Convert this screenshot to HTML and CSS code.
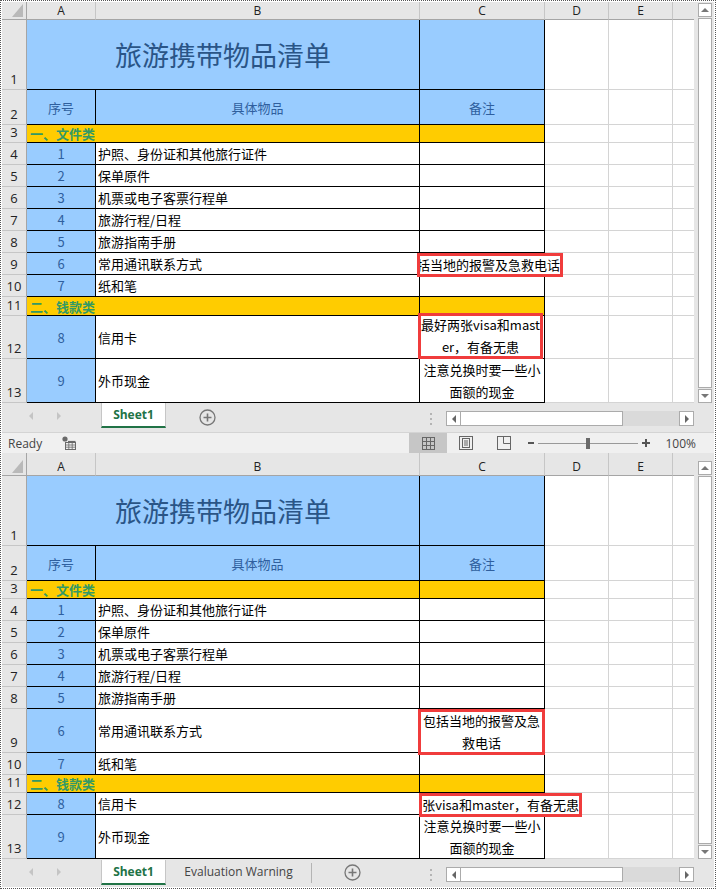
FILE: index.html
```html
<!DOCTYPE html>
<html lang="zh-CN">

<head>
    <meta charset="UTF-8">
    <title>旅游携带物品清单</title>
    <link rel="stylesheet" href="styles.css">
</head>

<body>
    <div class="page">
        <!-- 上面的窗口 -->
        <div class="window">
            <div class="main">
                <div class="sheet sheet-top">
                    <div class="corner"><svg width="11" height="13"><polygon points="11,0 11,13 0,13" fill="#b9b9b9"/></svg></div>
                    <div class="col-head">A</div>
                    <div class="col-head">B</div>
                    <div class="col-head">C</div>
                    <div class="col-head">D</div>
                    <div class="col-head">E</div>
                    <div class="col-head col-last"></div>

                    <div class="rh">1</div>
                    <div class="cell blue title span2">旅游携带物品清单</div>
                    <div class="cell blue"></div>
                    <div class="g"></div><div class="g"></div><div class="g g-last"></div>

                    <div class="rh">2</div>
                    <div class="cell blue head">序号</div>
                    <div class="cell blue head">具体物品</div>
                    <div class="cell blue head">备注</div>
                    <div class="g"></div><div class="g"></div><div class="g g-last"></div>

                    <div class="rh">3</div>
                    <div class="cell yellow section span2">一、文件类</div>
                    <div class="cell yellow"></div>
                    <div class="g"></div><div class="g"></div><div class="g g-last"></div>

                    <div class="rh">4</div>
                    <div class="cell blue num">1</div>
                    <div class="cell item">护照、身份证和其他旅行证件</div>
                    <div class="cell note"></div>
                    <div class="g"></div><div class="g"></div><div class="g g-last"></div>

                    <div class="rh">5</div>
                    <div class="cell blue num">2</div>
                    <div class="cell item">保单原件</div>
                    <div class="cell note"></div>
                    <div class="g"></div><div class="g"></div><div class="g g-last"></div>

                    <div class="rh">6</div>
                    <div class="cell blue num">3</div>
                    <div class="cell item">机票或电子客票行程单</div>
                    <div class="cell note"></div>
                    <div class="g"></div><div class="g"></div><div class="g g-last"></div>

                    <div class="rh">7</div>
                    <div class="cell blue num">4</div>
                    <div class="cell item">旅游行程/日程</div>
                    <div class="cell note"></div>
                    <div class="g"></div><div class="g"></div><div class="g g-last"></div>

                    <div class="rh">8</div>
                    <div class="cell blue num">5</div>
                    <div class="cell item">旅游指南手册</div>
                    <div class="cell note"></div>
                    <div class="g"></div><div class="g"></div><div class="g g-last"></div>

                    <div class="rh">9</div>
                    <div class="cell blue num">6</div>
                    <div class="cell item">常用通讯联系方式</div>
                    <div class="cell note">
                        <div class="mark mark-clip top-c9"><span>包括当地的报警及急救电话</span></div>
                    </div>
                    <div class="g"></div><div class="g"></div><div class="g g-last"></div>

                    <div class="rh">10</div>
                    <div class="cell blue num">7</div>
                    <div class="cell item">纸和笔</div>
                    <div class="cell note"></div>
                    <div class="g"></div><div class="g"></div><div class="g g-last"></div>

                    <div class="rh">11</div>
                    <div class="cell yellow section span2">二、钱款类</div>
                    <div class="cell yellow"></div>
                    <div class="g"></div><div class="g"></div><div class="g g-last"></div>

                    <div class="rh">12</div>
                    <div class="cell blue num">8</div>
                    <div class="cell item">信用卡</div>
                    <div class="cell note">
                        <div class="mark mark-wrap top-c12">最好两张visa和mast<br>er，有备无患</div>
                    </div>
                    <div class="g"></div><div class="g"></div><div class="g g-last"></div>

                    <div class="rh">13</div>
                    <div class="cell blue num">9</div>
                    <div class="cell item">外币现金</div>
                    <div class="cell note">注意兑换时要一些小<br>面额的现金</div>
                    <div class="g"></div><div class="g"></div><div class="g g-last"></div>
                </div>
                <div class="vscroll vscroll-top">
                    <div class="sbtn"><span class="tri-up"></span></div>
                    <div class="vthumb"></div>
                    <div class="sbtn"><span class="tri-down"></span></div>
                </div>
            </div>

            <div class="tabbar">
                <div class="tab-nav"><span class="tri-left light"></span><span class="tri-right light"></span></div>
                <div class="tab active">Sheet1</div>
                <div class="tab-add">
                    <svg width="17" height="17" viewBox="0 0 17 17"><circle cx="8.5" cy="8.5" r="7.5" fill="none" stroke="#777" stroke-width="1.3"/><path d="M8.5 4.5V12.5M4.5 8.5H12.5" stroke="#777" stroke-width="1.6"/></svg>
                </div>
                <div class="spacer"></div>
                <div class="grip"><i></i><i></i><i></i></div>
                <div class="hscroll">
                    <div class="hbtn"><span class="tri-left"></span></div>
                    <div class="hthumb"></div>
                    <div class="htrack"></div>
                    <div class="hbtn"><span class="tri-right"></span></div>
                </div>
            </div>

            <div class="statusbar">
                <span class="ready">Ready</span>
                <span class="macro">
                    <svg width="14" height="14" viewBox="0 0 14 14"><circle cx="3" cy="3" r="2.6" fill="#6a6a6a"/><rect x="3.5" y="6.5" width="10" height="7" fill="none" stroke="#6a6a6a"/><path d="M3.5 9H13.5M3.5 11.2H13.5M6.8 6.5V13.5M10.2 6.5V13.5" stroke="#6a6a6a" stroke-width="0.8"/><path d="M6 5.5H13.5" stroke="#6a6a6a" stroke-width="1.2"/></svg>
                </span>
                <div class="spacer"></div>
                <div class="view on">
                    <svg width="13" height="13" viewBox="0 0 13 13"><rect x="0.5" y="0.5" width="12" height="12" fill="none" stroke="#666"/><path d="M4.5 0.5V12.5M8.5 0.5V12.5M0.5 4.5H12.5M0.5 8.5H12.5" stroke="#666"/></svg>
                </div>
                <div class="view">
                    <svg width="14" height="14" viewBox="0 0 14 14"><rect x="0.5" y="0.5" width="13" height="13" fill="none" stroke="#666"/><rect x="3.5" y="2.5" width="7" height="9" fill="none" stroke="#666"/><path d="M5 5H9M5 7H9M5 9H9" stroke="#666"/></svg>
                </div>
                <div class="view">
                    <svg width="14" height="14" viewBox="0 0 14 14"><rect x="0.5" y="0.5" width="13" height="13" fill="none" stroke="#666"/><path d="M6.5 0.5V7.5H13.5" fill="none" stroke="#666"/></svg>
                </div>
                <span class="zoom-minus"></span>
                <div class="slider"><span class="knob"></span></div>
                <span class="zoom-plus"></span>
                <span class="pct">100%</span>
            </div>
        </div>

        <!-- 下面的窗口 -->
        <div class="window">
            <div class="main">
                <div class="sheet sheet-bottom">
                    <div class="corner"><svg width="11" height="13"><polygon points="11,0 11,13 0,13" fill="#b9b9b9"/></svg></div>
                    <div class="col-head">A</div>
                    <div class="col-head">B</div>
                    <div class="col-head">C</div>
                    <div class="col-head">D</div>
                    <div class="col-head">E</div>
                    <div class="col-head col-last"></div>

                    <div class="rh">1</div>
                    <div class="cell blue title span2">旅游携带物品清单</div>
                    <div class="cell blue"></div>
                    <div class="g"></div><div class="g"></div><div class="g g-last"></div>

                    <div class="rh">2</div>
                    <div class="cell blue head">序号</div>
                    <div class="cell blue head">具体物品</div>
                    <div class="cell blue head">备注</div>
                    <div class="g"></div><div class="g"></div><div class="g g-last"></div>

                    <div class="rh">3</div>
                    <div class="cell yellow section span2">一、文件类</div>
                    <div class="cell yellow"></div>
                    <div class="g"></div><div class="g"></div><div class="g g-last"></div>

                    <div class="rh">4</div>
                    <div class="cell blue num">1</div>
                    <div class="cell item">护照、身份证和其他旅行证件</div>
                    <div class="cell note"></div>
                    <div class="g"></div><div class="g"></div><div class="g g-last"></div>

                    <div class="rh">5</div>
                    <div class="cell blue num">2</div>
                    <div class="cell item">保单原件</div>
                    <div class="cell note"></div>
                    <div class="g"></div><div class="g"></div><div class="g g-last"></div>

                    <div class="rh">6</div>
                    <div class="cell blue num">3</div>
                    <div class="cell item">机票或电子客票行程单</div>
                    <div class="cell note"></div>
                    <div class="g"></div><div class="g"></div><div class="g g-last"></div>

                    <div class="rh">7</div>
                    <div class="cell blue num">4</div>
                    <div class="cell item">旅游行程/日程</div>
                    <div class="cell note"></div>
                    <div class="g"></div><div class="g"></div><div class="g g-last"></div>

                    <div class="rh">8</div>
                    <div class="cell blue num">5</div>
                    <div class="cell item">旅游指南手册</div>
                    <div class="cell note"></div>
                    <div class="g"></div><div class="g"></div><div class="g g-last"></div>

                    <div class="rh">9</div>
                    <div class="cell blue num">6</div>
                    <div class="cell item">常用通讯联系方式</div>
                    <div class="cell note">
                        <div class="mark mark-wrap bottom-c9">包括当地的报警及急<br>救电话</div>
                    </div>
                    <div class="g"></div><div class="g"></div><div class="g g-last"></div>

                    <div class="rh">10</div>
                    <div class="cell blue num">7</div>
                    <div class="cell item">纸和笔</div>
                    <div class="cell note"></div>
                    <div class="g"></div><div class="g"></div><div class="g g-last"></div>

                    <div class="rh">11</div>
                    <div class="cell yellow section span2">二、钱款类</div>
                    <div class="cell yellow"></div>
                    <div class="g"></div><div class="g"></div><div class="g g-last"></div>

                    <div class="rh">12</div>
                    <div class="cell blue num">8</div>
                    <div class="cell item">信用卡</div>
                    <div class="cell note">
                        <div class="mark mark-clip bottom-c12"><span>最好两张visa和master，有备无患</span></div>
                    </div>
                    <div class="g"></div><div class="g"></div><div class="g g-last"></div>

                    <div class="rh">13</div>
                    <div class="cell blue num">9</div>
                    <div class="cell item">外币现金</div>
                    <div class="cell note">注意兑换时要一些小<br>面额的现金</div>
                    <div class="g"></div><div class="g"></div><div class="g g-last"></div>
                </div>
                <div class="vscroll vscroll-bottom">
                    <div class="sbtn"><span class="tri-up"></span></div>
                    <div class="vthumb"></div>
                    <div class="sbtn"><span class="tri-down"></span></div>
                </div>
            </div>

            <div class="tabbar tabbar-bottom">
                <div class="tab-nav"><span class="tri-left light"></span><span class="tri-right light"></span></div>
                <div class="tab active">Sheet1</div>
                <div class="tab-plain">Evaluation Warning</div>
                <div class="tab-sep"></div>
                <div class="tab-add tab-add-2">
                    <svg width="17" height="17" viewBox="0 0 17 17"><circle cx="8.5" cy="8.5" r="7.5" fill="none" stroke="#777" stroke-width="1.3"/><path d="M8.5 4.5V12.5M4.5 8.5H12.5" stroke="#777" stroke-width="1.6"/></svg>
                </div>
                <div class="spacer"></div>
                <div class="grip"><i></i><i></i><i></i></div>
                <div class="hscroll">
                    <div class="hbtn"><span class="tri-left"></span></div>
                    <div class="hthumb"></div>
                    <div class="htrack"></div>
                    <div class="hbtn"><span class="tri-right"></span></div>
                </div>
            </div>
        </div>
    </div>
</body>

</html>
```

FILE: styles.css
```css
* {
    box-sizing: border-box;
}

body {
    margin: 0;
    background: #fff;
}

.page {
    width: 716px;
    border: 1px dotted #555;
    padding: 1px 1px 1px 1px;
}

.window {
    display: flex;
    flex-direction: column;
    background: #e6e6e6;
}

.main {
    display: flex;
}

/* 表格区域 */
.sheet {
    display: grid;
    grid-template-columns: 25px 69px 324px 125px 64px 64px 21px;
    font-family: "Noto Sans CJK SC", sans-serif;
    font-size: 13px;
    background: #fff;
}

.sheet-top {
    grid-template-rows: 18px 70px 35px 18px repeat(7, 22px) 19px 43px 44px;
}

.sheet-bottom {
    grid-template-rows: 23px 70px 35px 18px repeat(5, 22px) 44px 22px 18px 22px 44px;
}

.corner {
    background: #e6e6e6;
    border-right: 1px solid #a5a5a5;
    border-bottom: 1px solid #a5a5a5;
    display: flex;
    align-items: flex-end;
    justify-content: flex-end;
    padding: 0 3px 2px 0;
}

.col-head {
    background: #e6e6e6;
    border-right: 1px solid #c6c6c6;
    border-bottom: 1px solid #a5a5a5;
    display: flex;
    align-items: center;
    justify-content: center;
    font-family: "Open Sans", sans-serif;
    font-size: 12px;
    color: #222;
}

.sheet-bottom .col-head {
    padding-top: 5px;
}

.col-last {
    border-right: 0;
}

.rh {
    background: #e6e6e6;
    border-right: 1px solid #a5a5a5;
    border-bottom: 1px solid #c6c6c6;
    display: flex;
    align-items: flex-end;
    justify-content: center;
    font-family: "Open Sans", sans-serif;
    font-size: 13px;
    line-height: 17px;
    color: #222;
    padding-bottom: 1px;
}

.cell {
    position: relative;
    border-right: 1px solid #000;
    border-bottom: 1px solid #000;
    display: flex;
    align-items: center;
    color: #000;
}

.span2 {
    grid-column: span 2;
}

.g {
    border-right: 1px solid #d4d4d4;
    border-bottom: 1px solid #d4d4d4;
}

.g-last {
    border-right: 0;
}

.blue {
    background: #99ccff;
    color: #2f5f9e;
}

.yellow {
    background: #ffcc00;
}

.title {
    justify-content: center;
    font-size: 27px;
    color: #2a5587;
}

.head {
    justify-content: center;
}

.section {
    padding-left: 3px;
    color: #339966;
    font-weight: bold;
}

.num {
    justify-content: center;
}

.item {
    padding-left: 2px;
}

.note {
    justify-content: center;
    text-align: center;
    line-height: 22px;
}

/* 红框标注 */
.mark {
    position: absolute;
    z-index: 2;
    border: 3px solid #f03c3c;
    background: #fff;
    display: flex;
    align-items: center;
}

.mark-clip {
    justify-content: flex-end;
    overflow: hidden;
    white-space: nowrap;
}

.mark-clip span {
    flex-shrink: 0;
}

.mark-wrap {
    justify-content: center;
    text-align: center;
    line-height: 22px;
}

.top-c9 {
    left: -3px;
    top: 0;
    width: 146px;
    height: 24px;
}

.top-c12 {
    left: -2px;
    top: -3px;
    width: 125px;
    height: 46px;
}

.bottom-c9 {
    left: -2px;
    top: 0;
    width: 127px;
    height: 46px;
}

.bottom-c12 {
    left: -1px;
    top: 0;
    width: 163px;
    height: 24px;
}

/* 滚动条 */
.vscroll {
    width: 20px;
    display: flex;
    flex-direction: column;
    padding: 1px 2px 0 4px;
}

.vscroll-bottom {
    padding-top: 8px;
}

.sbtn {
    height: 14px;
    background: #fff;
    border: 1px solid #ababab;
    display: flex;
    align-items: center;
    justify-content: center;
}

.vthumb {
    flex: 1;
    background: #fff;
    border: 1px solid #ababab;
    margin: 1px 0;
}

.tri-up {
    border-left: 4px solid transparent;
    border-right: 4px solid transparent;
    border-bottom: 4px solid #777;
}

.tri-down {
    border-left: 4px solid transparent;
    border-right: 4px solid transparent;
    border-top: 4px solid #777;
}

.tri-left {
    border-top: 4px solid transparent;
    border-bottom: 4px solid transparent;
    border-right: 4px solid #666;
}

.tri-right {
    border-top: 4px solid transparent;
    border-bottom: 4px solid transparent;
    border-left: 4px solid #666;
}

.tri-left.light {
    border-right-color: #c4c4c4;
}

.tri-right.light {
    border-left-color: #c4c4c4;
}

/* 工作表标签 */
.tabbar {
    height: 29px;
    display: flex;
    align-items: flex-start;
    font-family: "Open Sans", sans-serif;
    font-size: 12px;
}

.tabbar-bottom {
    height: 28px;
}

.tab-nav {
    width: 99px;
    height: 25px;
    display: flex;
    align-items: center;
    padding-left: 27px;
    gap: 24px;
}

.tab {
    width: 65px;
    height: 25px;
    background: #fff;
    border-left: 1px solid #c6c6c6;
    border-right: 1px solid #c6c6c6;
    border-bottom: 2px solid #217346;
    color: #217346;
    font-weight: bold;
    display: flex;
    align-items: center;
    justify-content: center;
    margin-top: 0;
}

.tabbar-bottom .tab {
    margin-top: 1px;
}

.tab-plain {
    width: 145px;
    height: 25px;
    display: flex;
    align-items: center;
    justify-content: center;
    color: #444;
}

.tab-sep {
    width: 1px;
    height: 20px;
    margin-top: 4px;
    background: #b4b4b4;
}

.tab-add {
    margin-left: 33px;
    margin-top: 6px;
    height: 17px;
}

.tab-add-2 {
    margin-left: 32px;
    margin-top: 5px;
}

.spacer {
    flex: 1;
}

.grip {
    width: 2px;
    margin-right: 14px;
    margin-top: 10px;
    display: flex;
    flex-direction: column;
    gap: 3px;
}

.grip i {
    width: 2px;
    height: 2px;
    background: #b4b4b4;
}

.hscroll {
    width: 248px;
    height: 15px;
    margin-top: 8px;
    margin-right: 20px;
    display: flex;
}

.tabbar-bottom .hscroll {
    margin-top: 8px;
}

.hbtn {
    width: 15px;
    background: #fff;
    border: 1px solid #ababab;
    display: flex;
    align-items: center;
    justify-content: center;
}

.hthumb {
    width: 162px;
    background: #fff;
    border: 1px solid #ababab;
    border-left: 0;
}

.htrack {
    flex: 1;
    background: #dadada;
}

/* 状态栏 */
.statusbar {
    height: 21px;
    background: #f0f0f0;
    border-top: 1px solid #d4d4d4;
    display: flex;
    align-items: center;
    font-family: "Open Sans", sans-serif;
    font-size: 12px;
    color: #444;
}

.ready {
    padding-left: 6px;
}

.macro {
    margin-left: 20px;
    display: flex;
}

.view {
    width: 38px;
    height: 20px;
    display: flex;
    align-items: center;
    justify-content: center;
}

.view.on {
    background: #c6c6c6;
}

.zoom-minus {
    width: 6px;
    height: 2px;
    margin-left: 5px;
    background: #555;
}

.slider {
    position: relative;
    width: 100px;
    height: 1px;
    margin-left: 4px;
    background: #999;
}

.knob {
    position: absolute;
    left: 48px;
    top: -5px;
    width: 4px;
    height: 11px;
    background: #6a6a6a;
}

.zoom-plus {
    position: relative;
    width: 8px;
    height: 8px;
    margin-left: 4px;
    background: linear-gradient(#555, #555) center / 8px 2px no-repeat,
        linear-gradient(#555, #555) center / 2px 8px no-repeat;
}

.pct {
    margin-left: 15px;
    margin-right: 18px;
}
```
